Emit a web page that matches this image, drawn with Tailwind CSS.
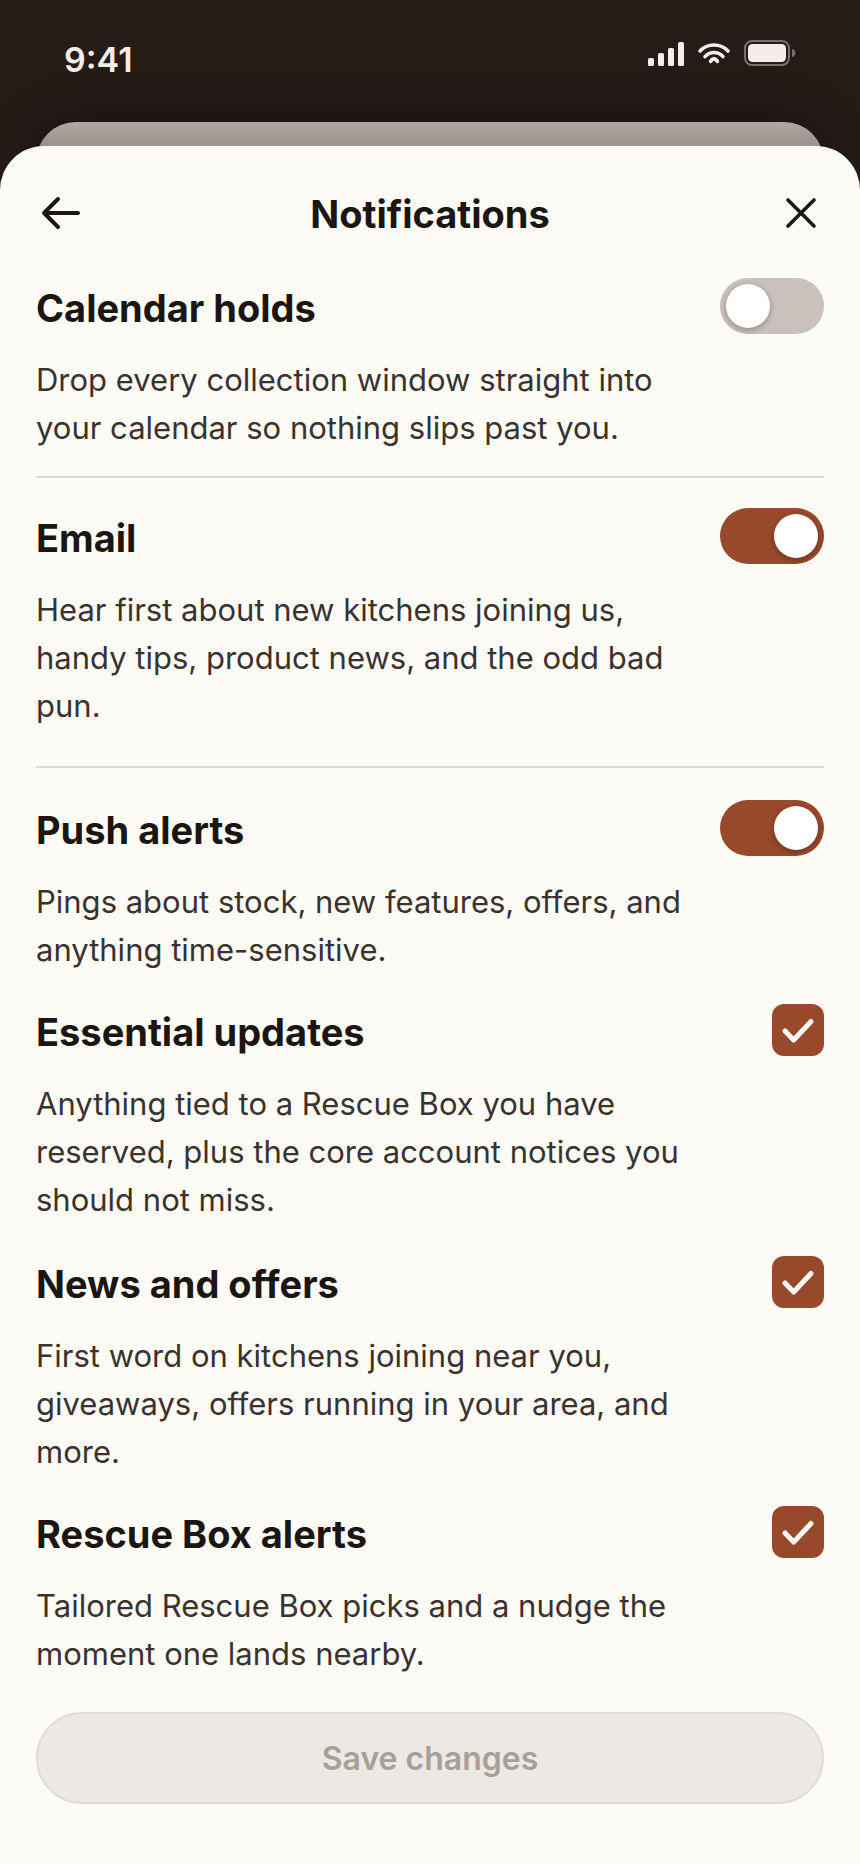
<!DOCTYPE html>
<html lang="en">
<head>
    <meta charset="UTF-8">
    <meta name="viewport" content="width=device-width, initial-scale=1.0">
    <title>Notifications</title>

    <script src="https://cdn.jsdelivr.net/npm/@tailwindcss/browser@4"></script>
</head>

<body class="flex min-h-screen flex-col bg-[#251b17] font-['Inter','Liberation_Sans',sans-serif] text-[#1b1612]">
    <!-- Status bar -->
    <div class="flex items-start justify-between px-16 pt-10 pb-[42px] text-[#f5edea]">
        <span class="text-[34px] leading-10 font-semibold">9:41</span>

        <div class="flex gap-4">
            <svg class="h-[26px] w-[36px]" viewBox="0 0 36 26" fill="currentColor" aria-hidden="true">
                <rect x="0" y="18" width="6" height="8" rx="1.5" />
                <rect x="10" y="13" width="6" height="13" rx="1.5" />
                <rect x="20" y="8" width="6" height="18" rx="1.5" />
                <rect x="30" y="2" width="6" height="24" rx="1.5" />
            </svg>
            <svg class="h-[26px] w-[28px] overflow-visible" viewBox="0 0 28 26" fill="none" stroke="currentColor" stroke-width="3.6" stroke-linecap="round" aria-hidden="true">
                <path d="M0 11C7.4 3 20.6 3 28 11" />
                <path d="M5 16.6C10 11.2 18 11.2 23 16.6" />
                <path d="M10.6 21.4C12.4 18 15.6 18 17.4 21.4" />
            </svg>
            <svg class="h-[26px] w-[52px]" viewBox="0 0 52 26" aria-hidden="true">
                <rect x="1" y="1" width="44" height="24" rx="7" fill="none" stroke="#7a716d" stroke-width="2" />
                <rect x="4" y="4" width="38" height="18" rx="4.5" fill="currentColor" />
                <path d="M48 9C52.5 10 52.5 16 48 17Z" fill="#7a716d" />
            </svg>
        </div>
    </div>

    <!-- Sheet underneath -->
    <div class="mx-9 h-20 rounded-t-[40px] bg-linear-to-b from-[#b1a8a3] to-[#989189] to-30% shadow-[0_0_48px_rgba(0,0,0,0.35)]"></div>

    <main class="-mt-14 flex grow flex-col rounded-t-[44px] bg-[#fdfbf6] px-9 pt-10 pb-[60px]">
        <header class="mb-[34px] flex h-14 items-center justify-between">
            <button type="button" aria-label="Back" class="size-12">
                <svg viewBox="0 0 48 48" fill="none" stroke="currentColor" stroke-width="4" stroke-linecap="round" stroke-linejoin="round">
                    <path d="M42 23H8M22 9L8 23L22 37" />
                </svg>
            </button>
            <h1 class="text-[38px] leading-14 font-bold">Notifications</h1>
            <button type="button" aria-label="Close" class="size-12">
                <svg viewBox="0 0 48 48" fill="none" stroke="currentColor" stroke-width="3.6" stroke-linecap="round">
                    <path d="M12 10L38 36M38 10L12 36" />
                </svg>
            </button>
        </header>

        <form class="flex grow flex-col" onsubmit="return false">
            <section class="border-b-2 border-[#dddbd7] pb-6">
                <div class="mb-5 flex items-center justify-between">
                    <label for="calendar" class="pt-1 text-[38px] leading-14 font-bold">Calendar holds</label>
                    <input type="checkbox" role="switch" id="calendar" class="h-14 w-[104px] appearance-none rounded-full bg-[#c9c1bc] p-1.5 before:block before:size-11 before:rounded-full before:bg-white before:shadow-[0_2px_6px_rgba(0,0,0,0.3)] checked:bg-[#98492b] checked:before:ml-12" />
                </div>
                <p class="pr-[120px] text-[31px] leading-12 text-[#3a322e]">Drop every collection window straight into your calendar so nothing slips past you.</p>
            </section>

            <section class="border-b-2 border-[#dddbd7] pt-7 pb-9">
                <div class="mb-5 flex items-center justify-between">
                    <label for="email" class="pt-1 text-[38px] leading-14 font-bold">Email</label>
                    <input type="checkbox" role="switch" id="email" checked class="h-14 w-[104px] appearance-none rounded-full bg-[#c9c1bc] p-1.5 before:block before:size-11 before:rounded-full before:bg-white before:shadow-[0_2px_6px_rgba(0,0,0,0.3)] checked:bg-[#98492b] checked:before:ml-12" />
                </div>
                <p class="pr-[120px] text-[31px] leading-12 text-[#3a322e]">Hear first about new kitchens joining us, handy tips, product news, and the odd bad pun.</p>
            </section>

            <section class="pt-[30px]">
                <div class="mb-5 flex items-center justify-between">
                    <label for="push" class="pt-1 text-[38px] leading-14 font-bold">Push alerts</label>
                    <input type="checkbox" role="switch" id="push" checked class="h-14 w-[104px] appearance-none rounded-full bg-[#c9c1bc] p-1.5 before:block before:size-11 before:rounded-full before:bg-white before:shadow-[0_2px_6px_rgba(0,0,0,0.3)] checked:bg-[#98492b] checked:before:ml-12" />
                </div>
                <p class="pr-[120px] text-[31px] leading-12 text-[#3a322e]">Pings about stock, new features, offers, and anything time-sensitive.</p>
            </section>

            <section class="pt-[26px]">
                <div class="mb-5 flex items-center justify-between">
                    <label for="essential" class="pt-1 text-[38px] leading-14 font-bold">Essential updates</label>
                    <div class="grid">
                        <input type="checkbox" id="essential" checked class="peer col-start-1 row-start-1 size-13 appearance-none rounded-xl bg-[#c9c1bc] checked:bg-[#98492b]" />
                        <svg class="pointer-events-none invisible col-start-1 row-start-1 size-13 peer-checked:visible" viewBox="0 0 52 52" fill="none" stroke="#fdfbf6" stroke-width="5" stroke-linecap="round" stroke-linejoin="round">
                            <path d="M13 27L21.7 36L39 17.5" />
                        </svg>
                    </div>
                </div>
                <p class="pr-[120px] text-[31px] leading-12 text-[#3a322e]">Anything tied to a Rescue Box you have reserved, plus the core account notices you should not miss.</p>
            </section>

            <section class="pt-7">
                <div class="mb-5 flex items-center justify-between">
                    <label for="news" class="pt-1 text-[38px] leading-14 font-bold">News and offers</label>
                    <div class="grid">
                        <input type="checkbox" id="news" checked class="peer col-start-1 row-start-1 size-13 appearance-none rounded-xl bg-[#c9c1bc] checked:bg-[#98492b]" />
                        <svg class="pointer-events-none invisible col-start-1 row-start-1 size-13 peer-checked:visible" viewBox="0 0 52 52" fill="none" stroke="#fdfbf6" stroke-width="5" stroke-linecap="round" stroke-linejoin="round">
                            <path d="M13 27L21.7 36L39 17.5" />
                        </svg>
                    </div>
                </div>
                <p class="pr-[120px] text-[31px] leading-12 text-[#3a322e]">First word on kitchens joining near you, giveaways, offers running in your area, and more.</p>
            </section>

            <section class="pt-[26px] pb-[34px]">
                <div class="mb-5 flex items-center justify-between">
                    <label for="rescue" class="pt-1 text-[38px] leading-14 font-bold">Rescue Box alerts</label>
                    <div class="grid">
                        <input type="checkbox" id="rescue" checked class="peer col-start-1 row-start-1 size-13 appearance-none rounded-xl bg-[#c9c1bc] checked:bg-[#98492b]" />
                        <svg class="pointer-events-none invisible col-start-1 row-start-1 size-13 peer-checked:visible" viewBox="0 0 52 52" fill="none" stroke="#fdfbf6" stroke-width="5" stroke-linecap="round" stroke-linejoin="round">
                            <path d="M13 27L21.7 36L39 17.5" />
                        </svg>
                    </div>
                </div>
                <p class="pr-[120px] text-[31px] leading-12 text-[#3a322e]">Tailored Rescue Box picks and a nudge the moment one lands nearby.</p>
            </section>

            <button type="submit" disabled class="mt-auto h-23 rounded-full border-2 border-[#e0ddd8] bg-[#ece8e3] pt-0.5 text-[32px] font-semibold text-[#a89f98]">Save changes</button>
        </form>
    </main>
</body>
</html>
